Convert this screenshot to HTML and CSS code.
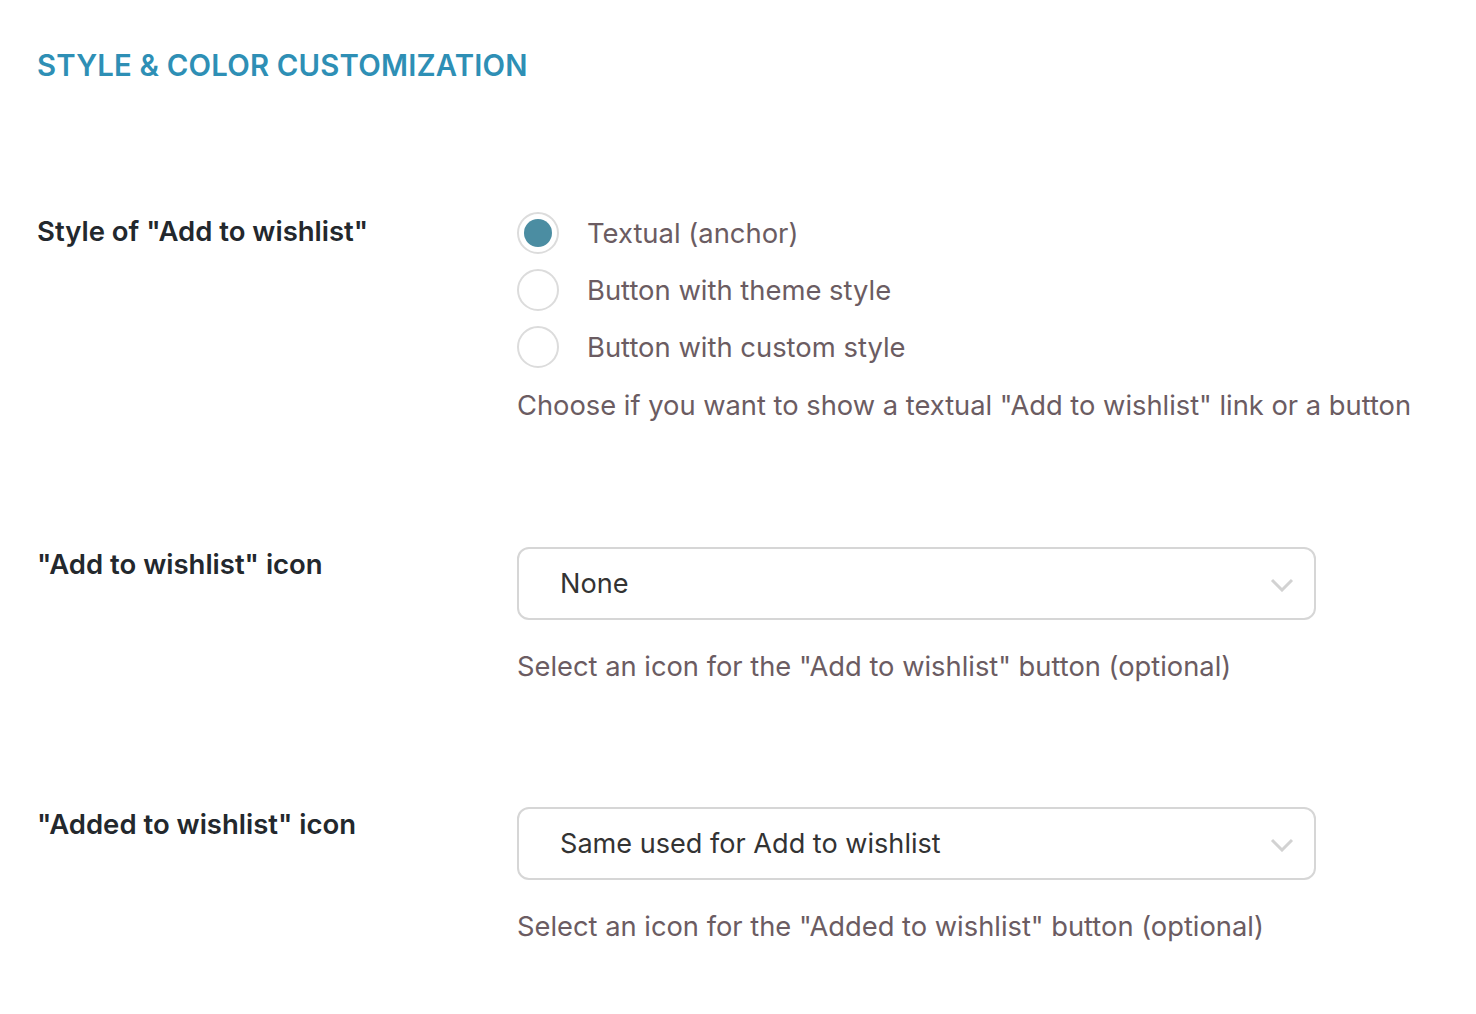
FILE: index.html
```html
<!DOCTYPE html>
<html lang="en">
<head>
<meta charset="utf-8">
<title>Style &amp; Color Customization</title>
<link rel="stylesheet" href="styles.css">
</head>
<body>
<main class="page">
  <h2 class="section-title">STYLE &amp; COLOR CUSTOMIZATION</h2>

  <div class="rows">
    <div class="row">
      <div class="label">Style of "Add to wishlist"</div>
      <div class="field">
        <ul class="radios">
          <li class="radio-item"><span class="radio checked"></span><span class="radio-text">Textual (anchor)</span></li>
          <li class="radio-item"><span class="radio"></span><span class="radio-text">Button with theme style</span></li>
          <li class="radio-item"><span class="radio"></span><span class="radio-text">Button with custom style</span></li>
        </ul>
        <p class="desc desc-radio">Choose if you want to show a textual "Add to wishlist" link or a button</p>
      </div>
    </div>

    <div class="row row-tight">
      <div class="label label-select">"Add to wishlist" icon</div>
      <div class="field">
        <div class="select">
          <span class="select-value">None</span>
          <svg class="chevron" viewBox="0 0 24 14" width="24" height="14"><path d="M2 2 L12 12 L22 2" fill="none" stroke="#d2d2d2" stroke-width="3"/></svg>
        </div>
        <p class="desc">Select an icon for the "Add to wishlist" button (optional)</p>
      </div>
    </div>

    <div class="row">
      <div class="label label-select">"Added to wishlist" icon</div>
      <div class="field">
        <div class="select">
          <span class="select-value">Same used for Add to wishlist</span>
          <svg class="chevron" viewBox="0 0 24 14" width="24" height="14"><path d="M2 2 L12 12 L22 2" fill="none" stroke="#d2d2d2" stroke-width="3"/></svg>
        </div>
        <p class="desc">Select an icon for the "Added to wishlist" button (optional)</p>
      </div>
    </div>
  </div>
</main>
</body>
</html>
```

FILE: styles.css
```css
* { box-sizing: border-box; }
html, body { margin: 0; padding: 0; background: #ffffff; }
body { font-family: Inter, "Noto Sans", sans-serif; }

.page { padding: 46px 0 0 37px; }

.section-title {
  margin: 0;
  font-size: 29.3px;
  line-height: 40px;
  font-weight: 600;
  color: #2e8fb5;
  letter-spacing: 0.2px;
}

.rows {
  display: flex;
  flex-direction: column;
  gap: 121px;
  margin-top: 125px;
}

.row { display: flex; align-items: flex-start; }
.row-tight { margin-bottom: -1px; }

.label {
  width: 480px;
  flex: none;
  font-size: 27.5px;
  line-height: 40px;
  font-weight: 600;
  color: #23282d;
}

.label-select { margin-top: -3px; }

.field { flex: 1; }

.radios { list-style: none; margin: 0; padding: 0; display: flex; flex-direction: column; gap: 14px; }

.radio-item { display: flex; align-items: center; height: 43px; }

.radio {
  width: 42px; height: 42px;
  border: 2px solid #dcdcdc;
  border-radius: 50%;
  flex: none;
  display: flex; align-items: center; justify-content: center;
  margin-right: 28px;
}
.radio.checked::after {
  content: "";
  width: 28px; height: 28px;
  border-radius: 50%;
  background: #4b8da2;
}

.radio-text {
  font-size: 27.4px;
  color: #6b5c62;
}

.desc {
  margin: 0;
  font-size: 27.3px;
  line-height: 40px;
  color: #6b5c62;
}
.desc-radio { margin-top: 18px; }

.select {
  width: 799px;
  height: 73px;
  border: 2px solid #d6d6d6;
  border-radius: 12px;
  display: flex;
  align-items: center;
  justify-content: space-between;
  padding: 0 20px 0 41px;
  margin-bottom: 27px;
}
.select-value {
  font-size: 27.1px;
  color: #333333;
}
.chevron { margin-top: 2px; }
```
